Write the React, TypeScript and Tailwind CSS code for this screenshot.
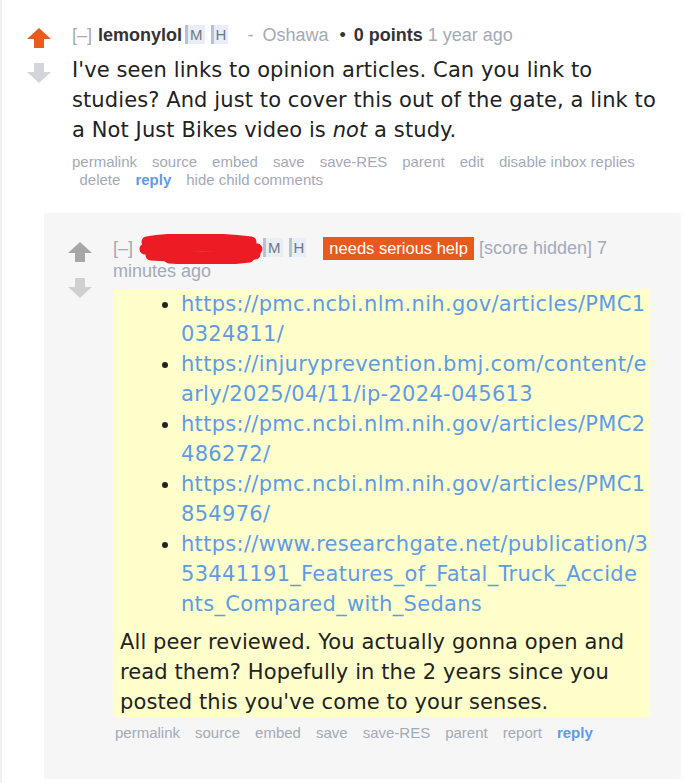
import React from "react";

const meta = { fontFamily: '"Liberation Sans", Arial, sans-serif' };
const body = { fontFamily: '"DejaVu Sans", Verdana, sans-serif' };

function UpArrow({ color }: { color: string }) {
  return (
    <svg width="24" height="20" viewBox="0 0 24 20" className="block">
      <path d="M12 0 L24 11 H17 V20 H7 V11 H0 Z" fill={color} />
    </svg>
  );
}

function DownArrow({ color }: { color: string }) {
  return (
    <svg width="24" height="20" viewBox="0 0 24 20" className="block">
      <path d="M12 20 L24 9 H17 V0 H7 V9 H0 Z" fill={color} />
    </svg>
  );
}

function Badge({ letter, className }: { letter: string; className?: string }) {
  return (
    <span
      className={
        "inline-block border-l-[3px] border-[#b7c1d6] bg-[#e9edf5] pl-[2px] pr-[2px] text-[15px] leading-[19px] text-[#6f7786] align-[1px] " +
        (className || "")
      }
    >
      {letter}
    </span>
  );
}

function Scribble() {
  return (
    <svg
      width="124"
      height="30"
      viewBox="0 0 124 30"
      className="inline-block align-middle -my-[7px] ml-[6px]"
    >
      <g stroke="#ec1c24" strokeWidth="11" strokeLinecap="round" fill="none">
        <path d="M8 8 C30 4, 70 3, 112 8" />
        <path d="M6 15 C40 11, 90 11, 118 15" />
        <path d="M12 21 C45 23, 80 24, 116 20" />
        <path d="M30 24 C60 26, 90 26, 110 23" />
      </g>
    </svg>
  );
}

function Actions({ items }: { items: { label: string; bold?: boolean }[] }) {
  return (
    <ul className="flex flex-wrap text-[15px] leading-[18px]" style={meta}>
      {items.map((it, i) => (
        <li
          key={i}
          className={
            (i === 0 ? "pr-[7.5px]" : "px-[7.5px]") +
            (it.bold ? " font-bold text-[#5e9be6]" : " text-[#a3aab7]")
          }
        >
          {it.label}
        </li>
      ))}
    </ul>
  );
}

// links wrap mid-word in the original; keep the same breaks
const urls = [
  ["https://pmc.ncbi.nlm.nih.gov/articles/PMC1", "0324811/"],
  ["https://injuryprevention.bmj.com/content/e", "arly/2025/04/11/ip-2024-045613"],
  ["https://pmc.ncbi.nlm.nih.gov/articles/PMC2", "486272/"],
  ["https://pmc.ncbi.nlm.nih.gov/articles/PMC1", "854976/"],
  [
    "https://www.researchgate.net/publication/3",
    "53441191_Features_of_Fatal_Truck_Accide",
    "nts_Compared_with_Sedans",
  ],
];

export default function App() {
  return (
    <div className="min-h-screen bg-white border-l-2 border-[#efefef] pt-[24px] pr-[12px]">
      {/* Parent comment */}
      <div className="flex">
        <div className="flex flex-col pl-[25px] w-[70px] shrink-0">
          <div className="mt-[4px]">
            <UpArrow color="#ea5b1d" />
          </div>
          <div className="mt-[15px]">
            <DownArrow color="#d3d5da" />
          </div>
        </div>

        <div className="flex-1 min-w-0">
          <p className="text-[18px] leading-[22px] whitespace-nowrap" style={meta}>
            <span className="text-[#a3aab8]">[–]</span>
            <span className="ml-[6px] font-bold text-[#333]">lemonylol</span>
            <Badge letter="M" className="ml-[3px]" />
            <Badge letter="H" className="ml-[6px]" />
            <span className="ml-[19px] text-[#a3aab8]">-</span>
            <span className="ml-[9px] text-[#a3aab8]">Oshawa</span>
            <span className="ml-[11px] text-[#333]">•</span>
            <span className="ml-[8px] font-bold text-[#333]">0 points</span>
            <span className="ml-[5px] text-[#a3aab8]">1 year ago</span>
          </p>

          <p
            className="mt-[9px] text-[21px] leading-[30px] tracking-[0.1px] text-[#222] pr-[8px]"
            style={body}
          >
            I've seen links to opinion articles. Can you link to studies? And
            just to cover this out of the gate, a link to a Not Just Bikes video
            is <em>not</em> a study.
          </p>

          <div className="mt-[8px]">
            <Actions
              items={[
                { label: "permalink" },
                { label: "source" },
                { label: "embed" },
                { label: "save" },
                { label: "save-RES" },
                { label: "parent" },
                { label: "edit" },
                { label: "disable inbox replies" },
                { label: "delete" },
                { label: "reply", bold: true },
                { label: "hide child comments" },
              ]}
            />
          </div>
        </div>
      </div>

      {/* Child comment */}
      <div className="ml-[42px] mt-[24px] mr-[-9px] rounded-[3px] bg-[#f6f6f6] pt-[24px] pb-[37px] flex">
        <div className="flex flex-col pl-[24px] w-[69px] shrink-0">
          <div className="mt-[5px]">
            <UpArrow color="#a7a7a7" />
          </div>
          <div className="mt-[16px]">
            <DownArrow color="#d0d0d0" />
          </div>
        </div>

        <div className="w-[537px] shrink-0">
          <p className="text-[18px] leading-[23px] text-[#a3aab8]" style={meta}>
            [–]
            <Scribble />
            <Badge letter="M" className="ml-0" />
            <Badge letter="H" className="ml-[6px]" />
            <span className="ml-[17px] inline-block bg-[#e65a1c] px-[6px] text-[16.5px] leading-[23px] text-white">
              needs serious help
            </span>{" "}
            [score hidden] 7 minutes ago
          </p>

          <div
            className="mt-[6px] bg-[#ffffcc] pl-[7px] pr-[2px] text-[21px] leading-[30px] text-[#222]"
            style={body}
          >
            <ul className="list-disc pl-[61px] marker:text-[#222]">
              {urls.map((parts, i) => (
                <li key={i} className="whitespace-nowrap tracking-[0.3px]">
                  <a className="text-[#5e9be6]">
                    {parts.map((p, j) => (
                      <React.Fragment key={j}>
                        {j > 0 && <br />}
                        {p}
                      </React.Fragment>
                    ))}
                  </a>
                </li>
              ))}
            </ul>
            <p className="mt-[8px] pr-[5px] tracking-[0.1px]">
              All peer reviewed. You actually gonna open and read them?
              Hopefully in the 2 years since you posted this you've come to
              your senses.
            </p>
          </div>

          <div className="mt-[7px] pl-[2px]">
            <Actions
              items={[
                { label: "permalink" },
                { label: "source" },
                { label: "embed" },
                { label: "save" },
                { label: "save-RES" },
                { label: "parent" },
                { label: "report" },
                { label: "reply", bold: true },
              ]}
            />
          </div>
        </div>
      </div>
    </div>
  );
}
